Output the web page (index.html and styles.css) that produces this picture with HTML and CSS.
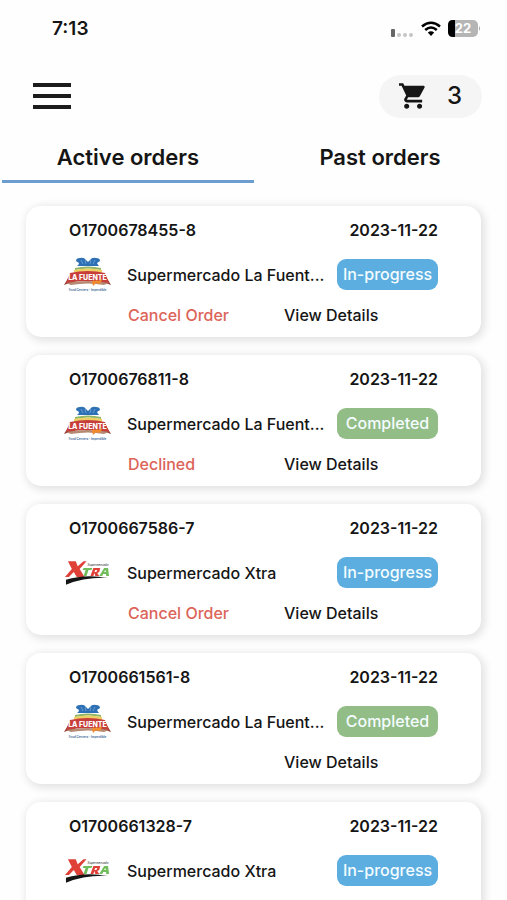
FILE: index.html
```html
<!DOCTYPE html>
<html lang="en">
<head>
<meta charset="utf-8">
<meta name="viewport" content="width=device-width, initial-scale=1">
<title>Orders</title>
<link rel="stylesheet" href="styles.css">
</head>
<body>
<svg class="sprite" aria-hidden="true">
  <symbol id="logo-fuente" viewBox="0 0 47 36">
    <path d="M12 4Q12 1 16 1Q20 0 22 3L24 5L26 3Q28 0 32 1Q36 1 36 4L33 6Q34 8 35 9H13Q15 8 15 6Z" fill="#2d70b5"/>
    <path d="M17 3L19 7M21 3L22 7M27 3L26 7M31 3L29 7" stroke="#8fb9df" stroke-width=".6"/>
    <path d="M11 11Q24 8 37 11V13Q24 10 11 13Z" fill="#8fb565"/>
    <path d="M10 13Q24 10 38 13V16H10Z" fill="#edcf63"/>
    <path d="M6 18L0 28Q6 25 11 27L12 20ZM41 18L47 28Q41 25 36 27L35 20Z" fill="#92382f"/>
    <path d="M6 16Q24 12 41 16L45 26Q24 22 2 26Z" fill="#c83e3b"/>
    <path d="M2 26Q24 22 45 26L40 28Q24 25 7 28Z" fill="#b68a72"/>
    <text x="23.5" y="22.500" class="logo-name" text-anchor="middle">LA FUENTE</text>
    <path d="M28 25Q29 22 31 24L33 23L34 24L38 22L37 26L34 27L32 26L29 29Z" fill="#f08a2e"/>
    <text x="23.5" y="34" class="logo-tag" text-anchor="middle">Food Centers - Imperdible</text>
  </symbol>
  <symbol id="logo-xtra" viewBox="-1 -1 48 28">
    <path d="M3 1H11L13 6L19 1H22L15 9L20 17H12L9 12L4 17H0L7 9Z" fill="#df4038"/>
    <path d="M19 8H28L27 10H24L22 16H19L21 10H18Z" fill="#71bd5b"/>
    <path fill-rule="evenodd" d="M29 8H36L35 12L33 13L35 16H31L30 13L29 16H26ZM31 10L30 12H32L33 10Z" fill="#df4038"/>
    <path fill-rule="evenodd" d="M40 8H44L45 16H42V14H39L38 16H35ZM41 10L40 12H42Z" fill="#71bd5b"/>
    <text x="23" y="6" class="logo-super">Supermercado</text>
    <path d="M1 20Q20 14 44 18Q20 17 1 25Z" fill="#151515"/>
  </symbol>
</svg>

<div class="app">
  <div class="status">
    <span class="time">7:13</span>
    <div class="indicators">
      <svg class="signal" viewBox="0 0 24 12" aria-hidden="true">
        <rect x="1" y="3" width="4" height="8" rx="1" fill="#666"/>
        <g fill="#c6c6c6"><circle cx="9" cy="9" r="2"/><circle cx="15" cy="9" r="2"/><circle cx="21" cy="9" r="2"/></g>
      </svg>
      <svg class="wifi" viewBox="0 0 20 16" aria-hidden="true">
        <g fill="none" stroke="#000" stroke-width="2.6"><path d="M1 5.500Q10 -2 19 5.500"/><path d="M4.200 9Q10 4 15.800 9"/></g>
        <path d="M6.800 11.500Q10 9 13.200 11.500L10 15Z"/>
      </svg>
      <svg class="battery" viewBox="0 0 33 17" aria-label="Battery 22%">
        <rect width="30" height="17" rx="5" fill="#b5b5b5"/>
        <path d="M5 0H7V17H5Q0 17 0 12V5Q0 0 5 0Z"/>
        <path d="M31 6Q33 8.500 31 11Z" fill="#a5a5a5"/>
        <text x="15" y="13" class="battery-level" text-anchor="middle">22</text>
      </svg>
    </div>
  </div>

  <header class="toolbar">
    <button class="menu" type="button" aria-label="Menu"><span></span><span></span><span></span></button>
    <button class="cart" type="button" aria-label="Cart, 3 items">
      <svg viewBox="1 2 21 20" aria-hidden="true"><path fill="#161616" d="M7 18c-1.100 0-1.990.9-1.990 2S5.900 22 7 22s2-.9 2-2-.9-2-2-2zM1 2v2h2l3.600 7.590-1.350 2.450c-.16.280-.25.610-.25.960 0 1.100.9 2 2 2h12v-2H7.420c-.14 0-.25-.11-.25-.25l.03-.12.900-1.630h7.450c.75 0 1.410-.41 1.750-1.030l3.580-6.490c.08-.14.120-.31.120-.48 0-.55-.45-1-1-1H5.210l-.94-2H1zm16 16c-1.100 0-1.990.9-1.990 2s.89 2 1.990 2 2-.9 2-2-.9-2-2-2z"/></svg>
      <span>3</span>
    </button>
  </header>

  <nav class="tabs">
    <a class="tab active" href="#active" aria-current="page">Active orders</a>
    <a class="tab" href="#past">Past orders</a>
  </nav>

  <main class="orders" id="active">
    <article class="order">
      <div class="summary"><span>O1700678455-8</span><time>2023-11-22</time></div>
      <div class="store"><svg class="logo" aria-hidden="true"><use href="#logo-fuente"/></svg><span class="name">Supermercado La Fuent...</span><span class="badge progress">In-progress</span></div>
      <div class="actions"><button class="cancel" type="button">Cancel Order</button><a class="details" href="#o1">View Details</a></div>
    </article>
    <article class="order">
      <div class="summary"><span>O1700676811-8</span><time>2023-11-22</time></div>
      <div class="store"><svg class="logo" aria-hidden="true"><use href="#logo-fuente"/></svg><span class="name">Supermercado La Fuent...</span><span class="badge completed">Completed</span></div>
      <div class="actions"><span class="cancel">Declined</span><a class="details" href="#o2">View Details</a></div>
    </article>
    <article class="order">
      <div class="summary"><span>O1700667586-7</span><time>2023-11-22</time></div>
      <div class="store"><svg class="logo" aria-hidden="true"><use href="#logo-xtra"/></svg><span class="name">Supermercado Xtra</span><span class="badge progress">In-progress</span></div>
      <div class="actions"><button class="cancel" type="button">Cancel Order</button><a class="details" href="#o3">View Details</a></div>
    </article>
    <article class="order">
      <div class="summary"><span>O1700661561-8</span><time>2023-11-22</time></div>
      <div class="store"><svg class="logo" aria-hidden="true"><use href="#logo-fuente"/></svg><span class="name">Supermercado La Fuent...</span><span class="badge completed">Completed</span></div>
      <div class="actions"><a class="details" href="#o4">View Details</a></div>
    </article>
    <article class="order">
      <div class="summary"><span>O1700661328-7</span><time>2023-11-22</time></div>
      <div class="store"><svg class="logo" aria-hidden="true"><use href="#logo-xtra"/></svg><span class="name">Supermercado Xtra</span><span class="badge progress">In-progress</span></div>
    </article>
  </main>
</div>
</body>
</html>
```
FILE: styles.css
```css
* { box-sizing: border-box; }

body {
  margin: 0;
  background: #fefefe;
  color: #151515;
  font: 500 16px/20px Inter, "Liberation Sans", sans-serif;
}

button {
  padding: 0;
  border: 0;
  background: none;
  color: inherit;
  font: inherit;
  cursor: pointer;
}

a { color: inherit; text-decoration: none; }

.sprite { display: none; }

.app {
  display: flex;
  flex-direction: column;
  height: 100vh;
  overflow: hidden;
}

.status {
  display: flex;
  flex: none;
  align-items: center;
  justify-content: space-between;
  height: 57px;
  padding: 0 26px 0 52px;
}

.time { font-size: 19px; font-weight: 600; }

.indicators { display: flex; align-items: center; gap: 7px; }
.signal { width: 24px; height: 12px; margin-top: 6px; }
.wifi { width: 20px; height: 16px; }
.battery { width: 33px; height: 17px; }
.battery-level { font-size: 13px; font-weight: 700; fill: #fff; }

.toolbar {
  display: flex;
  flex: none;
  align-items: center;
  justify-content: space-between;
  height: 78px;
  padding: 0 25px 0 33px;
}

.menu {
  display: flex;
  flex-direction: column;
  gap: 7px;
  width: 38px;
}
.menu span { height: 4px; background: #1c1c1c; }

.cart {
  display: flex;
  align-items: center;
  gap: 21px;
  height: 43px;
  padding: 0 20px;
  border-radius: 22px;
  background: #f5f5f5;
  font-size: 24px;
}
.cart svg { width: 27px; height: 26px; }

.tabs {
  display: flex;
  flex: none;
  padding: 0 1px 0 2px;
}
.tab {
  flex: 1;
  height: 48px;
  padding-top: 12px;
  border-bottom: 3px solid transparent;
  font-size: 22px;
  font-weight: 600;
  text-align: center;
}
.tab.active { border-color: #6c9dce; }

.orders {
  display: flex;
  flex: 1;
  flex-direction: column;
  gap: 18px;
  min-height: 0;
  padding: 23px 26px;
  overflow-y: auto;
  scrollbar-width: none;
}

.order {
  flex: none;
  min-height: 131px;
  padding: 14px 43px 12px 38px;
  border-radius: 15px;
  background: #fff;
  box-shadow: 2px 2px 9px 2px rgb(0 0 0 / 11%);
}

.summary {
  display: flex;
  justify-content: space-between;
  padding-left: 5px;
  font-weight: 600;
}

.store {
  display: grid;
  grid-template-columns: 47px minmax(0, 1fr) 101px;
  align-items: center;
  column-gap: 16px;
  margin-top: 19px;
}
.logo { width: 47px; height: 36px; margin: -3px 0; }
.name { font-weight: 450; white-space: nowrap; }

.badge {
  height: 31px;
  border-radius: 9px;
  color: #f4fcff;
  font-weight: 450;
  line-height: 31px;
  text-align: center;
}
.progress { background: #5caee0; }
.completed { background: #93bd87; }

.actions {
  display: grid;
  grid-template-columns: 156px 1fr;
  margin-top: 15px;
  padding-left: 64px;
  font-weight: 450;
}
.cancel { grid-column: 1; color: #dc6459; text-align: left; }
.details { grid-column: 2; justify-self: start; }

.logo-name { font: 800 7px Inter, sans-serif; fill: #fff; }
.logo-tag { font: 600 3px Inter, sans-serif; fill: #315d92; }
.logo-super { font: italic 600 3px Inter, sans-serif; fill: #555; }
```
